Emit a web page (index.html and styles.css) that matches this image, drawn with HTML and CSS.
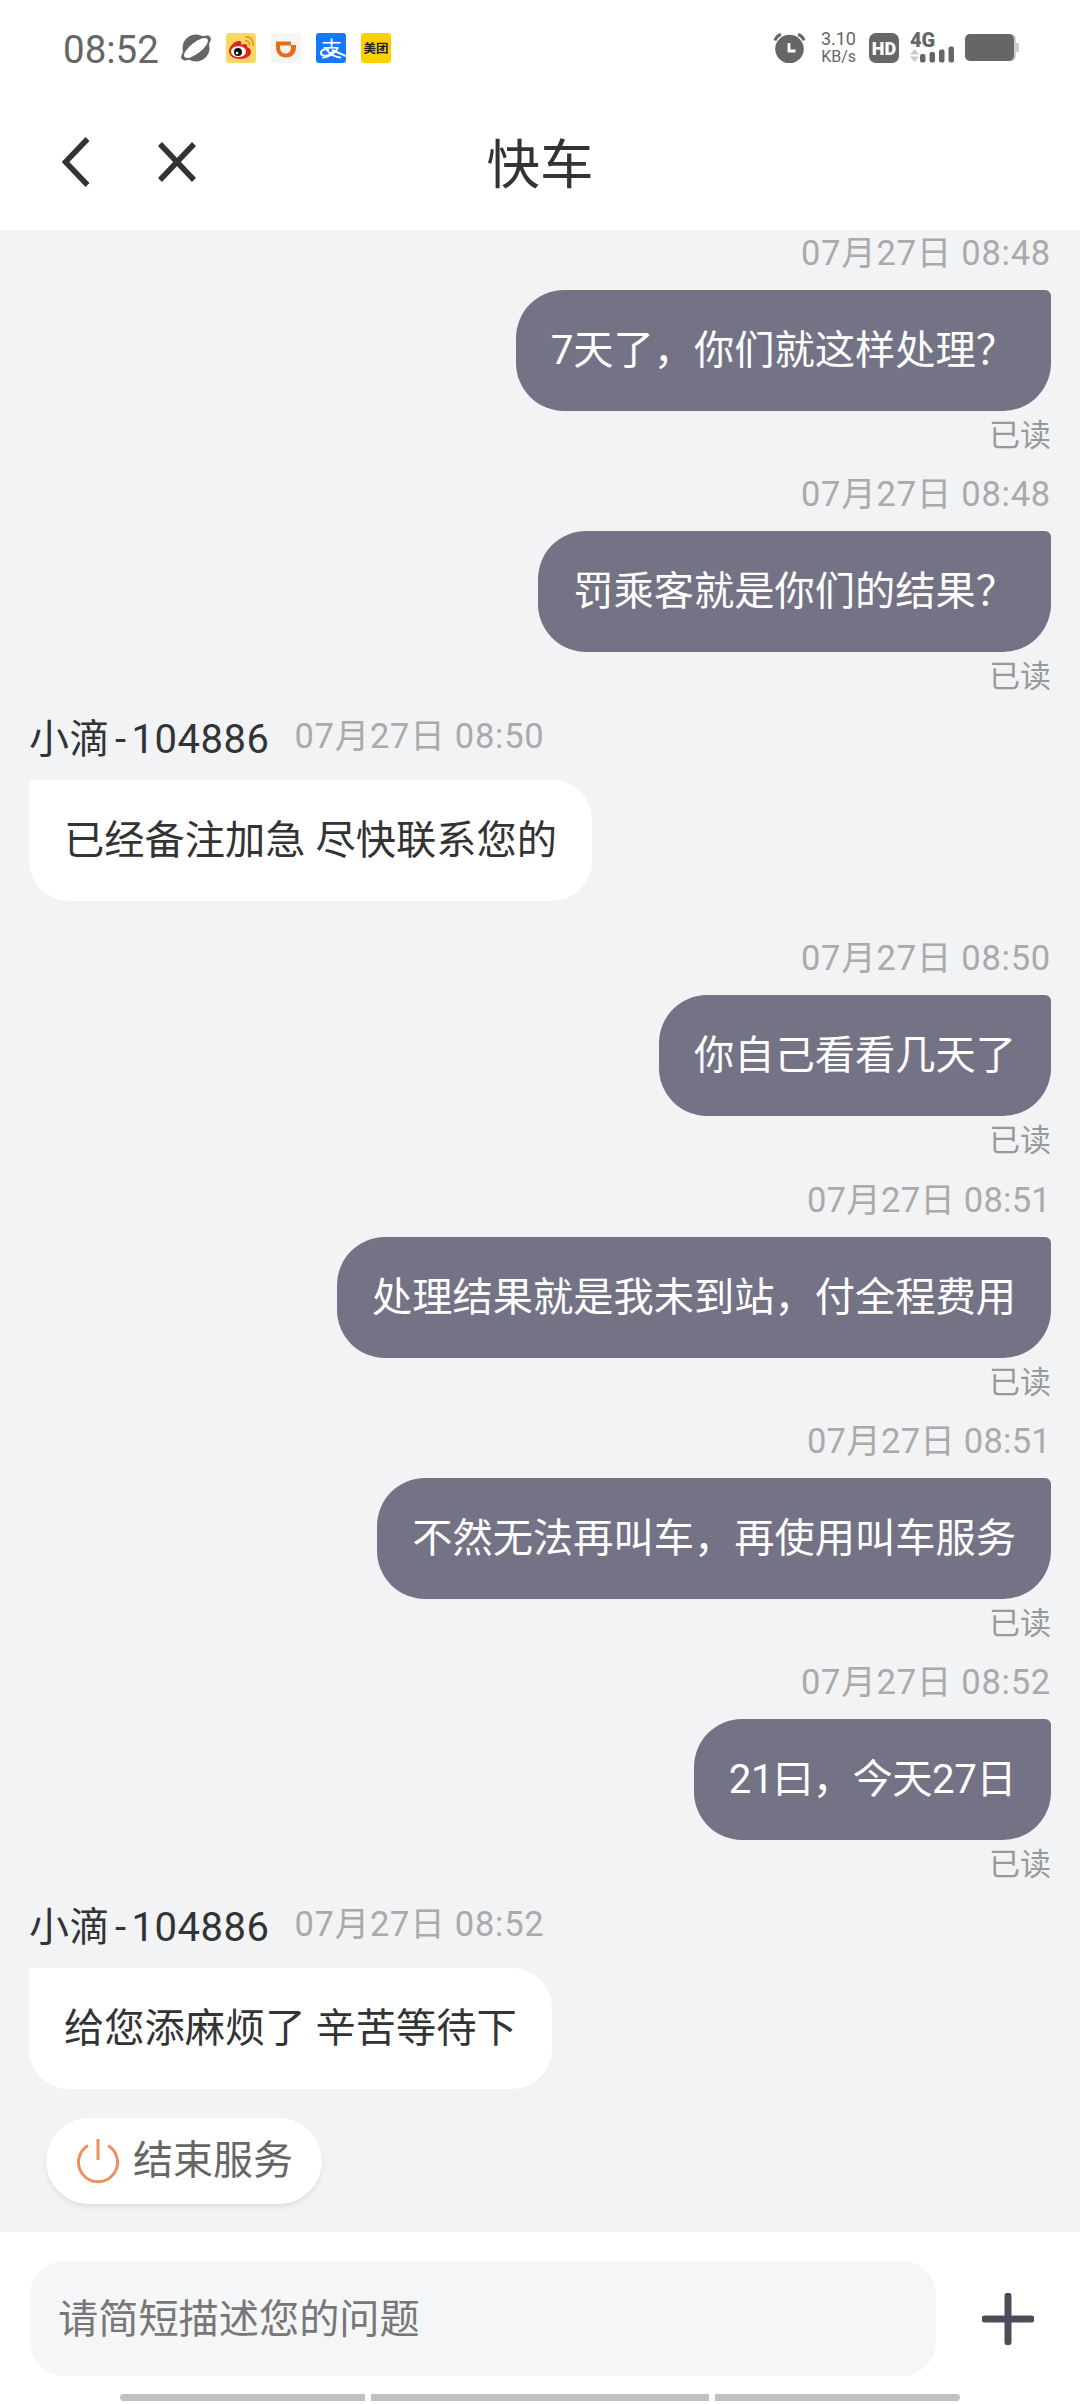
FILE: index.html
```
<!DOCTYPE html>
<html lang="zh-CN">
<head>
    <meta charset="UTF-8">
    <meta name="viewport" content="width=device-width, initial-scale=1.0">
    <title>快车</title>
    <link rel="stylesheet" href="styles.css">
</head>
<body>
    <div class="status-bar">
        <span class="clock">08:52</span>
        <div class="app-icons">
            <svg width="30" height="30" viewBox="0 0 30 30">
                <circle cx="15" cy="15" r="13.5" fill="#666"/>
                <ellipse cx="15" cy="15" rx="18" ry="7" transform="rotate(-38 15 15)" fill="#666"/>
                <ellipse cx="15" cy="15" rx="14.500" ry="5.500" transform="rotate(-38 15 15)" fill="#fff"/>
            </svg>
            <svg width="30" height="30" viewBox="0 0 30 30">
                <rect width="30" height="30" rx="3" fill="#fbd865"/>
                <path d="M3 18C3 13 9 8 13 8c2 0 3 1 2 4 4-2 7-1 6 2 3 1 4 3 4 5 0 4-5 7-11 7S3 23 3 18z" fill="#e2231a"/>
                <ellipse cx="12.500" cy="18.500" rx="7.500" ry="5.500" fill="#fff"/>
                <circle cx="12" cy="19" r="4" fill="#111"/>
                <circle cx="11" cy="20" r="1.300" fill="#fff"/>
                <path d="M19 4c5-1 9 3 8 9M19 8c3-.5 5 1.500 4.500 4.500" fill="none" stroke="#f0982d" stroke-width="1.800"/>
            </svg>
            <svg width="30" height="30" viewBox="0 0 30 30">
                <rect width="30" height="30" fill="#f6f5f5"/>
                <path d="M5 8.500h15v3.500h5v2c0 6.500-4 10.500-10 10.500S5 20.500 5 14z" fill="#ec6a15"/>
                <path d="M9 12.500h11v1.500c0 4-2 6.500-5.500 6.500S9 18 9 14z" fill="#f6f5f5"/>
            </svg>
            <svg width="30" height="30" viewBox="0 0 30 30">
                <rect width="30" height="30" rx="3" fill="#1677ff"/>
                <text x="15.500" y="22.500" class="logo-zhi">支</text>
                <path d="M13 17c-4-2-8 0-8 3 0 4 8 4 12-2M16 17l14 6" fill="none" stroke="#fff" stroke-width="2"/>
            </svg>
            <svg width="30" height="30" viewBox="0 0 30 30">
                <rect width="30" height="30" rx="3" fill="#ffd000"/>
                <text x="15" y="19.500" class="logo-meituan">美团</text>
            </svg>
        </div>
        <div class="system-icons">
            <svg width="33" height="30" viewBox="0 0 33 30">
                <circle cx="16.500" cy="16" r="14.300" fill="#666"/>
                <path d="M2 7.500c1-3 3-5 6-6M31 7.500c-1-3-3-5-6-6" fill="none" stroke="#666" stroke-width="3"/>
                <path d="M16 10v8h6.500" fill="none" stroke="#fff" stroke-width="2.800"/>
            </svg>
            <div class="net-speed">
                <span>3.10</span>
                <span>KB/s</span>
            </div>
            <span class="hd">HD</span>
            <svg class="signal" width="45" height="43" viewBox="0 -6 45 43">
                <text x="0" y="14.500" class="signal-text">4G</text>
                <path d="M0 22.500l4.500-5.500 4.500 5.500zM0 24.500l4.500 5.500 4.500-5.500z" fill="#ccc"/>
                <g fill="#666">
                    <rect x="10" y="22" width="5.500" height="8.500" rx="2"/>
                    <rect x="19.500" y="20" width="5.500" height="10.500" rx="2"/>
                    <rect x="29" y="17.500" width="5.500" height="13" rx="2"/>
                    <rect x="38.500" y="14.500" width="5.500" height="16" rx="2"/>
                </g>
            </svg>
            <svg width="54" height="27" viewBox="0 0 54 27">
                <path d="M44 0h2a5 5 0 0 1 5 5v4h3v9h-3v4a5 5 0 0 1-5 5h-2z" fill="#ccc"/>
                <rect width="49" height="27" rx="5" fill="#666"/>
            </svg>
        </div>
    </div>

    <header class="title-bar">
        <svg class="nav-icons" width="150" height="60" viewBox="0 0 150 60">
            <path d="M37.500 6L15.500 29l22 23M110 11l34 36M144 11l-34 36" fill="none" stroke="#333" stroke-width="5.500"/>
        </svg>
        <h1>快车</h1>
    </header>

    <main class="chat">
        <div class="message sent">
            <span class="time">07月27日 08:48</span>
            <p class="bubble">7天了，你们就这样处理？</p>
            <span class="read">已读</span>
        </div>
        <div class="message sent">
            <span class="time">07月27日 08:48</span>
            <p class="bubble">罚乘客就是你们的结果？</p>
            <span class="read">已读</span>
        </div>
        <div class="message received">
            <div class="sender">
                <span class="name">小滴<span class="dash">-</span>104886</span>
                <span class="time">07月27日 08:50</span>
            </div>
            <p class="bubble">已经备注加急 尽快联系您的</p>
        </div>
        <div class="message sent">
            <span class="time">07月27日 08:50</span>
            <p class="bubble">你自己看看几天了</p>
            <span class="read">已读</span>
        </div>
        <div class="message sent">
            <span class="time tight">07月27日 08:51</span>
            <p class="bubble">处理结果就是我未到站，付全程费用</p>
            <span class="read">已读</span>
        </div>
        <div class="message sent">
            <span class="time tight">07月27日 08:51</span>
            <p class="bubble">不然无法再叫车，再使用叫车服务</p>
            <span class="read">已读</span>
        </div>
        <div class="message sent">
            <span class="time">07月27日 08:52</span>
            <p class="bubble tight">21曰，今天27日</p>
            <span class="read">已读</span>
        </div>
        <div class="message received">
            <div class="sender">
                <span class="name">小滴<span class="dash">-</span>104886</span>
                <span class="time">07月27日 08:52</span>
            </div>
            <p class="bubble">给您添麻烦了 辛苦等待下</p>
        </div>
        <button class="end-service">
            <svg width="44" height="46" viewBox="0 0 44 46">
                <path d="M12 7.500a19.500 19.500 0 1 0 20 0M22 1v21" fill="none" stroke="#ee8e5c" stroke-width="3"/>
            </svg>
            <span>结束服务</span>
        </button>
    </main>

    <footer class="composer">
        <div class="input-row">
            <input type="text" placeholder="请简短描述您的问题">
            <svg width="52" height="52" viewBox="0 0 52 52">
                <path d="M3 26h46M26 3v46" fill="none" stroke="#4d4b5b" stroke-width="7" stroke-linecap="round"/>
            </svg>
        </div>
        <div class="gesture-bar">
            <span class="side"></span>
            <span class="middle"></span>
            <span class="side"></span>
        </div>
    </footer>
</body>
</html>
```
FILE: styles.css
```
* {
    box-sizing: border-box;
}

body {
    margin: 0;
    width: 1080px;
    height: 2404px;
    display: flex;
    flex-direction: column;
    overflow: hidden;
    background-color: #fff;
    color: #333;
    font-family: Roboto, "Noto Sans CJK SC", sans-serif;
}

svg {
    display: block;
    flex-shrink: 0;
}

/* Status bar */
.status-bar {
    height: 95px;
    padding: 0 61px 0 63px;
    display: flex;
    align-items: center;
    color: #666;
}

.clock {
    width: 118px;
    font-size: 38.5px;
    line-height: 40px;
    padding-top: 5px;
}

.app-icons {
    display: flex;
    gap: 15px;
}

.logo-zhi {
    fill: #fff;
    font-size: 21px;
    text-anchor: middle;
}

.logo-meituan {
    fill: #222;
    font-size: 12.5px;
    font-weight: 700;
    text-anchor: middle;
}

.system-icons {
    margin-left: auto;
    display: flex;
    align-items: center;
}

.net-speed {
    width: 38px;
    margin: 0 13px 0 12px;
    display: flex;
    flex-direction: column;
    align-items: flex-end;
    font-size: 18px;
    line-height: 18px;
}

.net-speed span:last-child {
    font-size: 16px;
    line-height: 17px;
}

.hd {
    width: 30px;
    height: 30px;
    border-radius: 7px;
    background-color: #666;
    color: #fff;
    font-size: 18px;
    font-weight: 900;
    line-height: 31px;
    text-align: center;
}

.signal {
    margin: 0 10px 0 11px;
}

.signal-text {
    fill: #666;
    font-size: 20px;
    font-weight: 900;
}

/* Title bar */
.title-bar {
    height: 135px;
    padding: 0 50px;
    display: grid;
    grid-template-columns: 1fr auto 1fr;
    align-items: center;
}

.title-bar h1 {
    margin: 0;
    padding-top: 6px;
    font-size: 53.5px;
    font-weight: 400;
    line-height: 60px;
}

/* Conversation */
.chat {
    flex: 1;
    padding: 0 29px;
    background-color: #f2f3f5;
    border-top: 1px solid #f1f1f1;
}

.message {
    display: flex;
    flex-direction: column;
    align-items: flex-start;
}

.bubble {
    margin: 0;
    height: 121px;
    padding: 0 35px;
    font-size: 40.25px;
    line-height: 122px;
    white-space: nowrap;
}

.bubble.tight {
    letter-spacing: -0.5px;
}

.time {
    height: 46px;
    font-size: 34.5px;
    line-height: 44px;
    letter-spacing: 0.75px;
    color: #aaa;
}

.time.tight {
    letter-spacing: 0.25px;
}

.sent {
    align-items: flex-end;
    margin-bottom: 13.4px;
}

.sent .time {
    margin-bottom: 13px;
}

.sent .bubble {
    border-radius: 48px 6px 48px 48px;
    background-color: #747386;
    color: #fff;
}

.read {
    height: 48px;
    font-size: 31px;
    line-height: 50px;
    color: #999;
}

.received {
    padding-top: 0.5px;
    margin-bottom: 35px;
}

.sender {
    display: flex;
    gap: 25px;
    height: 66px;
}

.name {
    font-size: 40px;
    line-height: 52px;
    letter-spacing: 0.5px;
}

.dash {
    margin: 0 5px;
}

.received .bubble {
    border-radius: 4px 40px 40px 40px;
    background-color: #fff;
}

.end-service {
    width: 276px;
    height: 86px;
    margin: -6px 0 0 17px;
    padding: 0 30px;
    display: flex;
    align-items: center;
    gap: 13px;
    border: none;
    border-radius: 43px;
    background-color: #fff;
    box-shadow: 0 3px 5px rgba(0, 0, 0, 0.08);
    color: #666;
    font-family: inherit;
    font-size: 40px;
    line-height: 50px;
    white-space: nowrap;
}

/* Message input */
.composer {
    height: 172px;
    padding-top: 29px;
}

.input-row {
    display: flex;
    align-items: center;
    padding: 0 46px 0 30px;
    justify-content: space-between;
}

.input-row input {
    width: 906px;
    height: 115px;
    padding: 2px 28px 0;
    border: none;
    border-radius: 34px;
    background-color: #f5f6f8;
    font-family: inherit;
    font-size: 40.2px;
}

.input-row input::placeholder {
    color: #777;
}

.gesture-bar {
    margin: 18px 120px 0;
    display: flex;
    gap: 6px;
}

.gesture-bar span {
    height: 7px;
    background-color: #c1c1c3;
}

.gesture-bar .side {
    flex: 1;
}

.gesture-bar .side:first-child {
    border-radius: 4px 0 0 4px;
}

.gesture-bar .side:last-child {
    border-radius: 0 4px 4px 0;
}

.gesture-bar .middle {
    width: 338px;
}
```
